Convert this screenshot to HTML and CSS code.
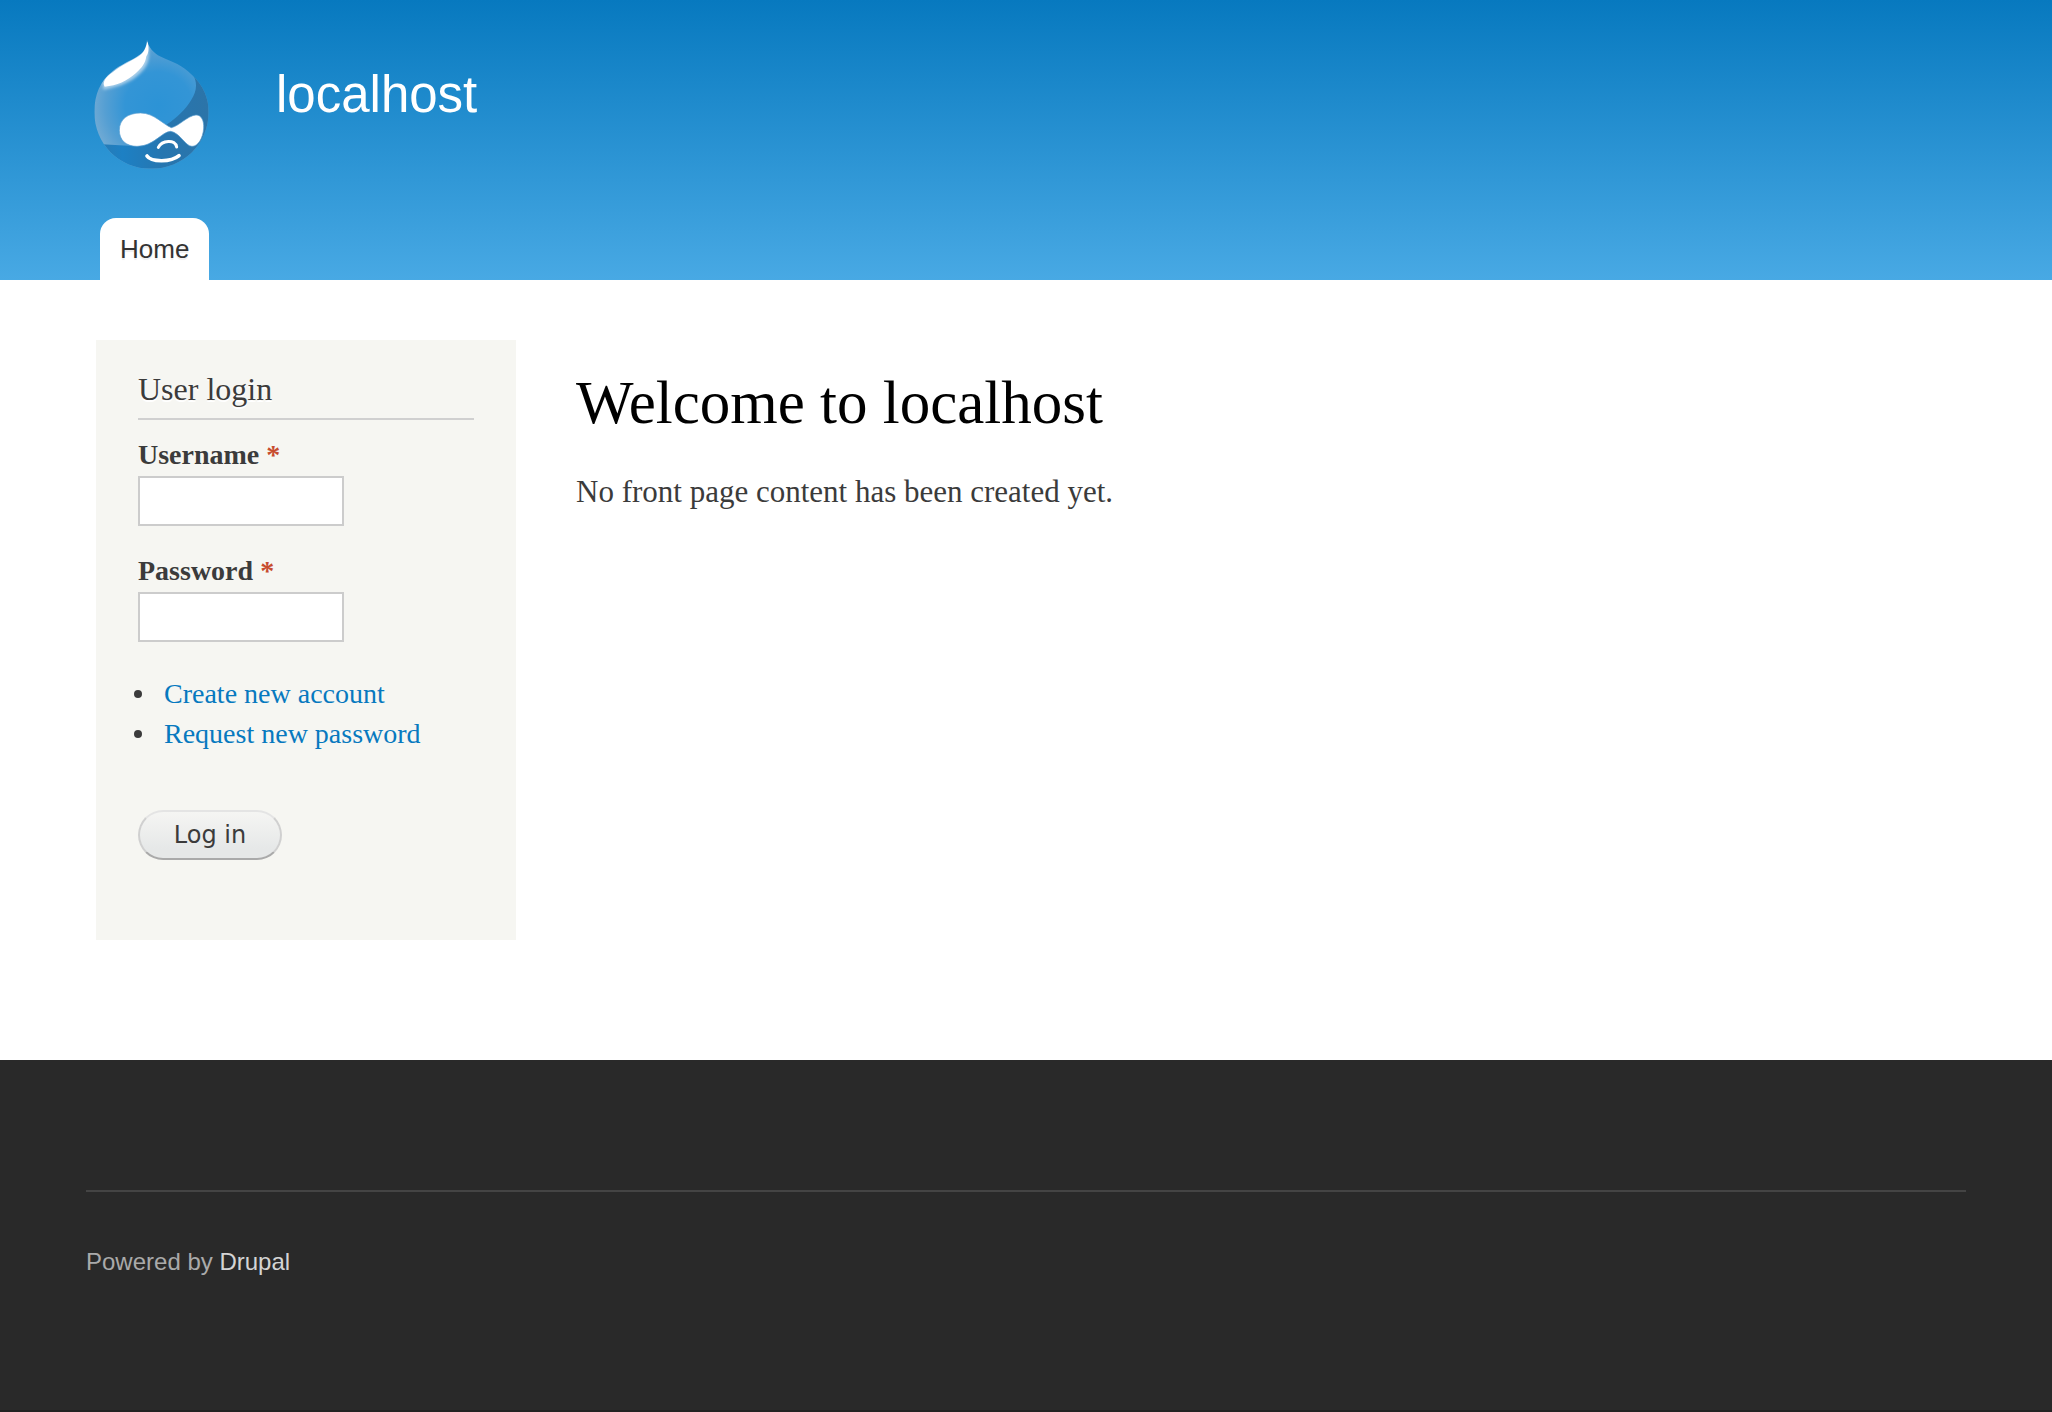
FILE: index.html
```html
<!DOCTYPE html>
<html lang="en">
<head>
  <meta charset="UTF-8" />
  <title>Welcome to localhost | localhost</title>
  <meta name="viewport" content="width=device-width, initial-scale=1.0">
  <link rel="stylesheet" href="styles.css">
</head>

<body>

  <header class="header">
    <div class="branding">
      <a href="#" class="logo" aria-label="Home page">
        <svg viewBox="42 26 345 390" width="115" height="130">
          <defs>
            <radialGradient id="drop" gradientUnits="userSpaceOnUse" cx="235" cy="225" r="200">
              <stop offset="0" stop-color="#2c93d6" />
              <stop offset="0.5" stop-color="#3395d6" />
              <stop offset="0.8" stop-color="#559fd3" />
              <stop offset="1" stop-color="#70aad4" />
            </radialGradient>
            <linearGradient id="shade" x1="0" y1="0" x2="1" y2="0">
              <stop offset="0" stop-color="#2b79b0" />
              <stop offset="0.25" stop-color="#1d80c4" />
              <stop offset="0.6" stop-color="#2676b0" />
              <stop offset="1" stop-color="#2c74a8" />
            </linearGradient>
            <filter id="soft" x="-10%" y="-10%" width="120%" height="120%">
              <feGaussianBlur stdDeviation="4" />
            </filter>
            <clipPath id="body">
              <path d="M201 28 C205 48 217 67 243 79 C278 95 307 103 337 135 C370 166 386 204 386 244 C386 341 309 415 213 415 C117 415 43 341 43 244 C43 192 62 150 96 124 C123 102 150 93 174 77 C193 65 199 51 201 28Z" />
            </clipPath>
          </defs>
          <g clip-path="url(#body)">
            <rect x="42" y="26" width="345" height="390" fill="url(#drop)" />
            <path d="M337 130 C354 155 350 185 334 208 C316 238 290 262 262 281 L206 320 C190 350 150 348 118 345 L40 340 L40 420 L390 420 L390 130Z" fill="url(#shade)" />
            <path d="M203 34 C210 72 208 96 192 116 C165 150 125 168 70 178 L66 150 L130 95 L190 60Z" fill="#a9cfea" filter="url(#soft)" />
            <path d="M203 34 C207 54 207 66 199 78 C196 100 186 112 168 128 C142 152 110 166 74 169 C66 158 76 140 98 126 C124 104 150 94 174 79 C192 67 198 54 201 34Z" fill="#fff" />
          </g>
          <path d="M118 300 C118 267 143 248 182 248 C222 248 250 283 274 292 C296 288 323 256 348 254 C365 254 372 272 371 293 C369 324 354 348 336 348 C316 348 300 307 272 303 C245 304 222 348 171 348 C138 348 118 329 118 300Z" fill="#fff" stroke="#5b9fd0" stroke-width="2" />
          <path d="M235 351 C246 329 286 326 290 350" fill="none" stroke="#fff" stroke-width="9" stroke-linecap="round" />
          <path d="M201 377 C213 395 272 397 297 376" fill="none" stroke="#fff" stroke-width="11" stroke-linecap="round" />
        </svg>
      </a>
      <a href="#" class="site-name">localhost</a>
    </div>
    <nav class="main-menu">
      <a href="#" class="tab">Home</a>
    </nav>
  </header>

  <div class="main-wrapper">
    <aside class="sidebar">
      <h2>User login</h2>
      <form>
        <div class="form-item">
          <label for="edit-name">Username <span class="required">*</span></label>
          <input type="text" id="edit-name" name="name" />
        </div>
        <div class="form-item">
          <label for="edit-pass">Password <span class="required">*</span></label>
          <input type="password" id="edit-pass" name="pass" />
        </div>
        <ul class="item-list">
          <li><a href="#">Create new account</a></li>
          <li><a href="#">Request new password</a></li>
        </ul>
        <button type="button" class="form-submit">Log in</button>
      </form>
    </aside>

    <main class="content">
      <h1>Welcome to localhost</h1>
      <p>No front page content has been created yet.</p>
    </main>
  </div>

  <footer class="footer">
    <p class="powered">Powered by <a href="#">Drupal</a></p>
  </footer>

</body>
</html>
```

FILE: styles.css
```css
:root {
  --text: #3b3b3b;
  --link: #0779bf;
  --serif: "Liberation Serif", serif;
  --sans: "Liberation Sans", sans-serif;
}

* {
  box-sizing: border-box;
}

body {
  margin: 0;
  min-height: 100vh;
  display: flex;
  flex-direction: column;
  background: #fff;
  color: var(--text);
  font-family: var(--serif);
}

a {
  color: var(--link);
  text-decoration: none;
}

h1, h2, p, ul {
  margin: 0;
  padding: 0;
  font-weight: normal;
}

/* header */
.header {
  padding: 39px 94px 0;
  background: linear-gradient(to bottom, #0779bf 0%, #48a9e4 100%);
  font-family: var(--sans);
}

.branding {
  display: flex;
  gap: 67px;
  margin-bottom: 49px;
}

.logo svg {
  display: block;
}

.site-name {
  margin-top: 26px;
  color: #fff;
  font-size: 51px;
  line-height: 60px;
}

.main-menu {
  display: flex;
  padding-left: 6px;
}

.tab {
  padding: 0 20px;
  border-radius: 16px 16px 0 0;
  background: #fff;
  color: #333;
  font-size: 26px;
  line-height: 62px;
  text-shadow: 0 2px 1px #eee;
}

/* columns */
.main-wrapper {
  display: flex;
  align-items: flex-start;
  gap: 60px;
  padding: 60px 96px 120px;
}

.sidebar {
  width: 420px;
  flex-shrink: 0;
  padding: 29px 42px 80px;
  background: #f6f6f2;
}

.sidebar h2 {
  margin-bottom: 19px;
  padding-bottom: 9px;
  border-bottom: 2px solid #d0d0d0;
  font-size: 32px;
  line-height: 40px;
  text-shadow: 0 2px 0 #fff;
}

.form-item {
  margin-bottom: 29px;
}

.form-item label {
  display: block;
  margin-bottom: 5px;
  font-size: 28px;
  font-weight: bold;
  line-height: 32px;
}

.required {
  color: #c74c2e;
}

.form-item input {
  display: block;
  width: 206px;
  height: 50px;
  padding: 4px 8px;
  border: 2px solid #ccc;
  background: #fff;
  color: var(--text);
  font-size: 24px;
}

.item-list {
  margin: 32px 0 56px -4px;
  list-style: none;
}

.item-list li {
  display: flex;
  align-items: center;
  gap: 22px;
  font-size: 28px;
  line-height: 40px;
}

.item-list li::before {
  content: "";
  width: 8px;
  height: 8px;
  border-radius: 50%;
  background: var(--text);
}

.form-submit {
  display: block;
  width: 144px;
  height: 50px;
  padding: 0;
  border: 2px solid #d0d0d0;
  border-top-color: #e4e4e4;
  border-bottom-color: #aaa;
  border-radius: 25px;
  background: linear-gradient(to bottom, #f5f5f3 0%, #e6e8e8 80%);
  color: var(--text);
  font-family: "DejaVu Sans", sans-serif;
  font-size: 24px;
  cursor: pointer;
}

.content {
  flex: 1;
  padding-top: 27px;
}

.content h1 {
  margin-bottom: 33px;
  color: #000;
  font-size: 61px;
  line-height: 72px;
}

.content p {
  font-size: 31px;
  line-height: 40px;
}

/* footer */
.footer {
  flex: 1;
  padding: 130px 86px;
  background: #292929;
  border-bottom: 2px solid #222;
  font-family: var(--sans);
}

.powered {
  padding-top: 52px;
  border-top: 2px solid #444;
  color: #aaa;
  font-size: 24px;
  line-height: 36px;
}

.powered a {
  color: #d4d4d4;
}
```
